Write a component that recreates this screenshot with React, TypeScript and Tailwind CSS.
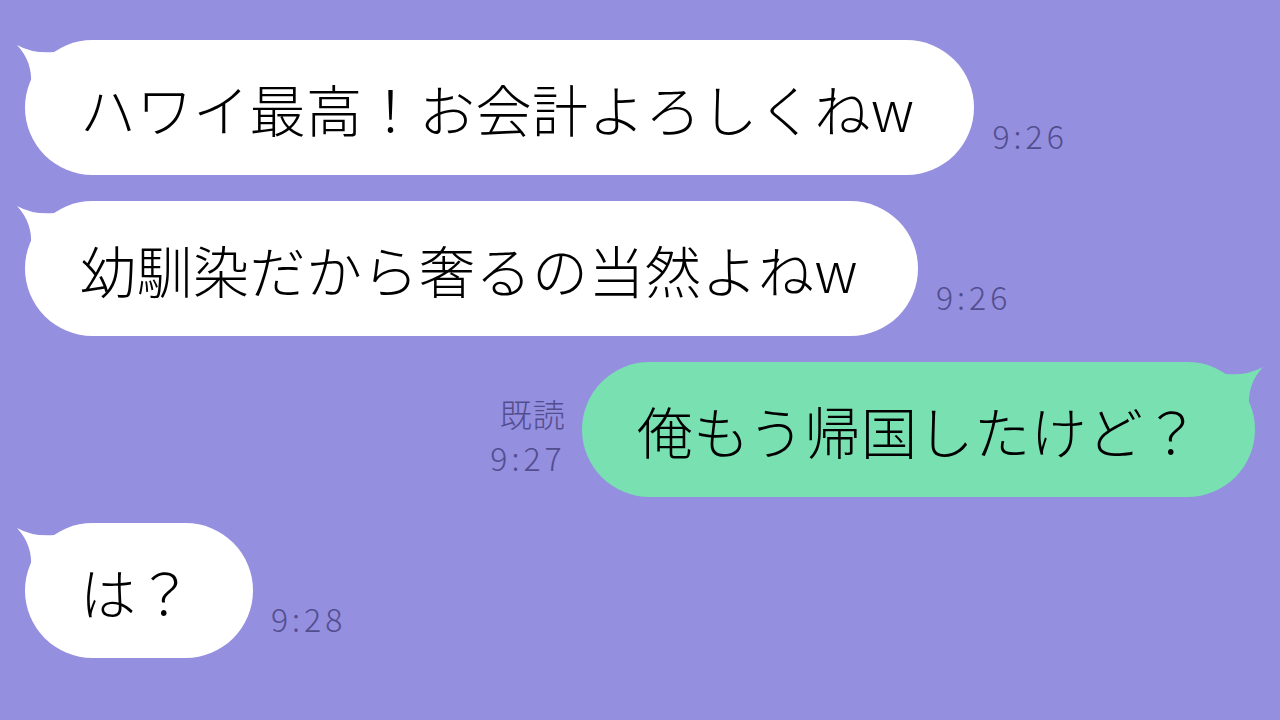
import React from "react";

type Msg = { text: string; time: string; mine?: boolean; read?: boolean };

const messages: Msg[] = [
  { text: "ハワイ最高！お会計よろしくねw", time: "9:26" },
  { text: "幼馴染だから奢るの当然よねw", time: "9:26" },
  { text: "俺もう帰国したけど？", time: "9:27", mine: true, read: true },
  { text: "は？", time: "9:28" },
];

const jp = { fontFamily: '"Noto Sans CJK JP", "Noto Sans", sans-serif' };

function Tail({ mine }: { mine?: boolean }) {
  // little horn on the top corner of the bubble
  if (mine) {
    return (
      <svg className="absolute top-0 right-[-10px]" width="44" height="46" viewBox="0 0 44 46">
        <path d="M42 5 Q26 14 4 12 L4 46 L28 46 Q26 22 42 5 Z" fill="#78e0b1" />
      </svg>
    );
  }
  return (
    <svg className="absolute top-0 left-[-10px]" width="44" height="46" viewBox="0 0 44 46">
      <path d="M2 5 Q18 14 40 12 L40 46 L16 46 Q18 22 2 5 Z" fill="#ffffff" />
    </svg>
  );
}

function Time({ time, read }: { time: string; read?: boolean }) {
  return (
    <div className="flex flex-col items-end pb-[20px] text-[#524e8e]" style={jp}>
      {read && <span className="text-[32px] leading-[48px] font-light tracking-[1px]">既読</span>}
      <span className="text-[32px] leading-[40px] font-light tracking-[4px]">{time}</span>
    </div>
  );
}

function Bubble({ m }: { m: Msg }) {
  return (
    <div className={`flex items-end ${m.mine ? "justify-end gap-[16px]" : "gap-[18px]"}`}>
      {m.mine && <Time time={m.time} read={m.read} />}
      <div
        className={`relative h-[135px] rounded-full flex items-center pl-[55px] ${
          m.mine ? "bg-[#78e0b1] pr-[55px]" : "bg-white pr-[60px]"
        }`}
      >
        <Tail mine={m.mine} />
        <span
          className="relative text-[56px] leading-none font-light tracking-[0.5px] text-black whitespace-nowrap"
          style={jp}
        >
          {m.text}
        </span>
      </div>
      {!m.mine && <Time time={m.time} />}
    </div>
  );
}

export default function App() {
  return (
    <div className="w-[1280px] h-[720px] overflow-hidden bg-[#958fe0] px-[25px] pt-[40px] flex flex-col gap-[26px]">
      {messages.map((m, i) => (
        <Bubble key={i} m={m} />
      ))}
    </div>
  );
}
